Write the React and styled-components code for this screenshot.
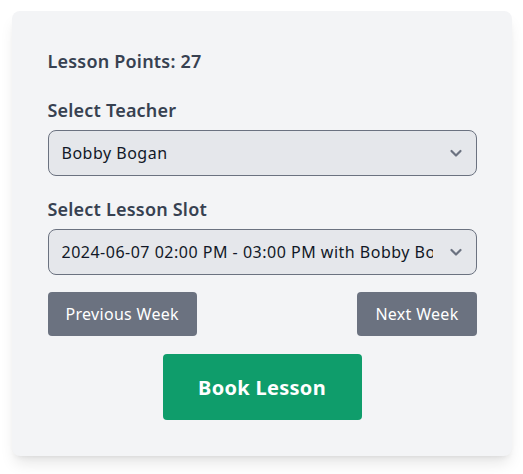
import React from "react";
import styled, { createGlobalStyle } from "styled-components";

const Global = createGlobalStyle`
  html, body { margin: 0; padding: 0; background: #ffffff; }
  body { font-family: "Noto Sans", "Open Sans", sans-serif; min-height: 474px; }
  #root { padding-bottom: 19px; }
  * { box-sizing: border-box; }
`;

const Card = styled.div`
  width: 500px;
  margin: 11px auto 0;
  background: #f3f4f6;
  border-radius: 8px;
  box-shadow: 0 10px 15px -3px rgba(0,0,0,0.1), 0 4px 6px -4px rgba(0,0,0,0.1);
  padding: 36px 35px 36px 36px;
  display: flex;
  flex-direction: column;
`;

const Points = styled.div`
  font-size: 18px;
  line-height: 28px;
  font-weight: 600;
  color: #374151;
  margin-bottom: 21px;
  letter-spacing: 0.2px;
`;

const Label = styled.label`
  display: block;
  font-size: 18px;
  line-height: 28px;
  font-weight: 600;
  color: #374151;
  margin-bottom: 6px;
  letter-spacing: 0.2px;
`;

const SelectWrap = styled.div`
  position: relative;
  margin-bottom: ${(p) => p.$mb}px;
`;

const Select = styled.select`
  appearance: none;
  -webkit-appearance: none;
  width: 100%;
  height: 46px;
  border: 1px solid #6b7280;
  border-radius: 8px;
  background: #e5e7eb;
  color: #111827;
  font-family: "Noto Sans", "Open Sans", sans-serif;
  font-size: 16px;
  padding: 0 43px 0 13px;
  outline: none;
  letter-spacing: 0.5px;
`;

const Chevron = styled.svg`
  position: absolute;
  right: 14px;
  top: 50%;
  transform: translateY(-50%);
  pointer-events: none;
`;

const WeekRow = styled.div`
  display: flex;
  justify-content: space-between;
  margin-bottom: 18px;
`;

const WeekButton = styled.button`
  height: 44px;
  padding: 0 18px;
  border: none;
  border-radius: 4px;
  background: #6b7280;
  color: #ffffff;
  font-family: "Noto Sans", "Open Sans", sans-serif;
  font-size: 16px;
  letter-spacing: 0.3px;
`;

const BookButton = styled.button`
  align-self: center;
  width: 199px;
  height: 66px;
  border: none;
  border-radius: 4px;
  background: #0f9d6b;
  color: #ffffff;
  font-family: "Noto Sans", "Open Sans", sans-serif;
  font-size: 20px;
  font-weight: 700;
  letter-spacing: 0.3px;
`;

const ChevronIcon = () => (
  <Chevron width="14" height="14" viewBox="0 0 14 14" fill="none">
    <path d="M2.5 5l4.5 4.5L11.5 5" stroke="#6b7280" strokeWidth="2.2" strokeLinecap="round" strokeLinejoin="round" />
  </Chevron>
);

export default function App() {
  return (
    <>
      <Global />
      <Card>
        <Points>Lesson Points: 27</Points>
        <Label htmlFor="teacher">Select Teacher</Label>
        <SelectWrap $mb={19}>
          <Select id="teacher" defaultValue="bobby">
            <option value="bobby">Bobby Bogan</option>
          </Select>
          <ChevronIcon />
        </SelectWrap>
        <Label htmlFor="slot">Select Lesson Slot</Label>
        <SelectWrap $mb={17}>
          <Select id="slot" defaultValue="s1">
            <option value="s1">2024-06-07 02:00 PM - 03:00 PM with Bobby Bogan</option>
          </Select>
          <ChevronIcon />
        </SelectWrap>
        <WeekRow>
          <WeekButton>Previous Week</WeekButton>
          <WeekButton>Next Week</WeekButton>
        </WeekRow>
        <BookButton>Book Lesson</BookButton>
      </Card>
    </>
  );
}
